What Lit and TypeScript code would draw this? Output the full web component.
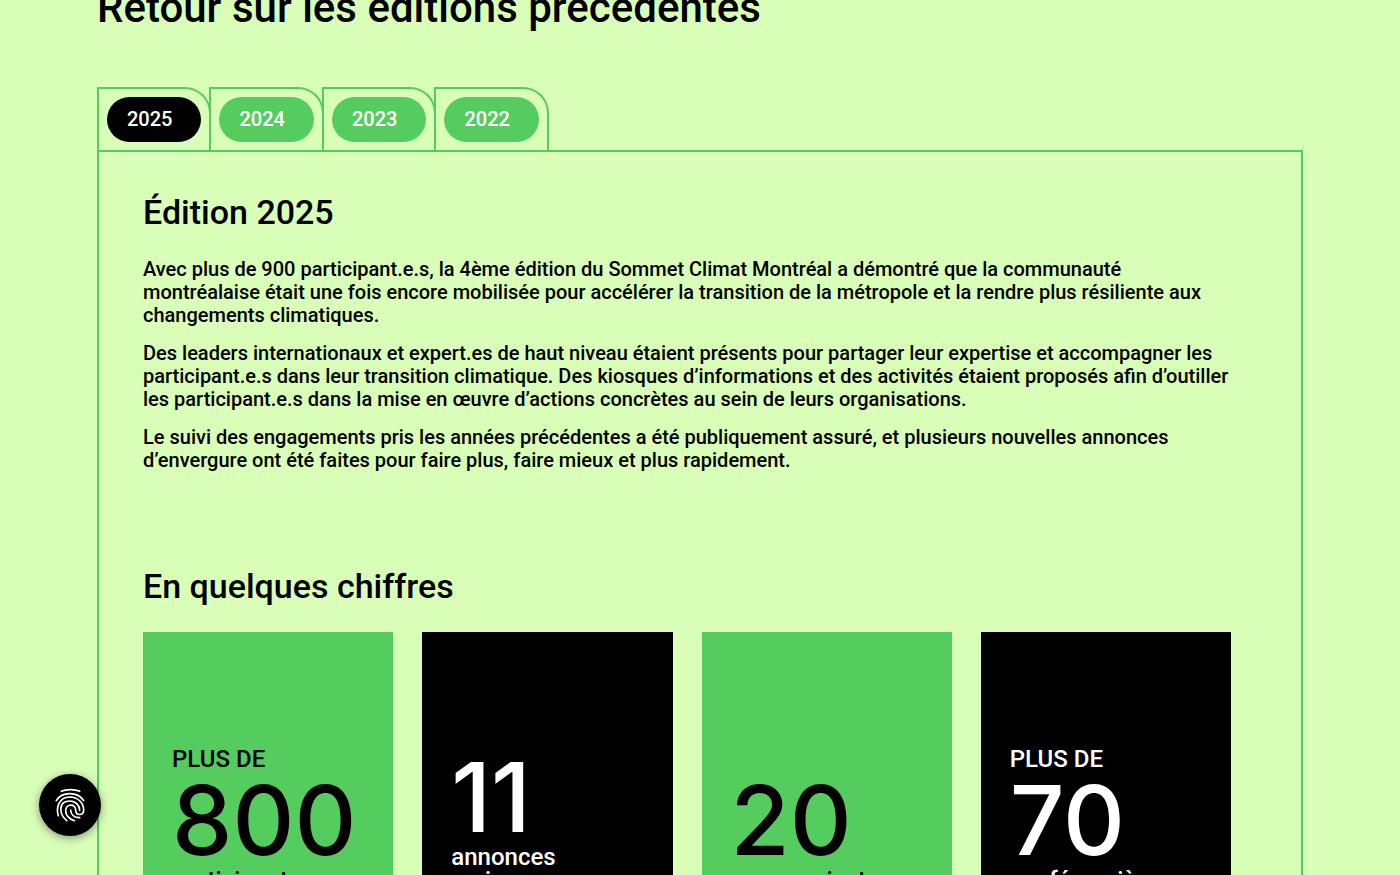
import { LitElement, html, css, nothing } from "lit";
import { customElement, state } from "lit/decorators.js";

interface Figure {
  prefix?: string;
  value: string;
  label: string[];
}

const YEARS = ["2025", "2024", "2023", "2022"];

const FIGURES: Figure[] = [
  { prefix: "PLUS DE", value: "800", label: ["participants"] },
  { value: "11", label: ["annonces", "majeures"] },
  { value: "20", label: ["co-organisateurs"] },
  { prefix: "PLUS DE", value: "70", label: ["conférencières"] },
];

@customElement("app-root")
export class AppRoot extends LitElement {
  static styles = css`
    :host {
      display: block;
      height: 100vh;
      overflow: hidden;
      background: #d9feb8;
      color: #000;
      font-family: Roboto, "Liberation Sans", sans-serif;
      font-weight: 500;
    }
    h1, h2, p { margin: 0; font-weight: 500; }
    .page { margin: -18px 97px 0; }
    h1 { font-size: 42px; line-height: 52px; }
    .tabs { display: flex; margin-top: 53px; }
    .tab {
      border: 2px solid #55cd5e;
      border-bottom: 0;
      border-top-right-radius: 26px;
      padding: 8px;
    }
    .tab + .tab { margin-left: -2px; }
    .pill {
      display: block;
      border: 0;
      border-radius: 24px;
      padding: 0 29px 0 20px;
      background: #55cd5e;
      color: #fff;
      font: inherit;
      font-size: 20px;
      line-height: 45px;
      cursor: pointer;
    }
    .pill.active { background: #000; }
    .panel {
      border: 2px solid #55cd5e;
      padding: 40px 70px 60px 44px;
    }
    h2 { font-size: 34px; line-height: 40px; }
    .prose {
      display: grid;
      gap: 15px;
      margin: 26px 0 94px;
      font-size: 20px;
      line-height: 23px;
    }
    .cards {
      display: grid;
      grid-template-columns: repeat(4, minmax(0, 1fr));
      gap: 29px;
      margin-top: 26px;
    }
    .card {
      display: flex;
      flex-direction: column;
      justify-content: flex-end;
      box-sizing: border-box;
      min-height: 289px;
      padding: 29px;
      background: #55cd5e;
      font-size: 24px;
      line-height: 23px;
    }
    .card:nth-child(even) { background: #000; color: #fff; }
    .value {
      font-family: Inter, Roboto, sans-serif;
      font-size: 96px;
      line-height: 98px;
    }
    .row { display: block; }
    .cookie {
      position: fixed;
      left: 39px;
      bottom: 39px;
      display: grid;
      place-items: center;
      width: 62px;
      height: 62px;
      padding: 0;
      border: 0;
      border-radius: 50%;
      background: #000;
      box-shadow: 0 2px 8px rgba(0, 0, 0, 0.4);
      cursor: pointer;
    }
  `;

  @state() private year = "2025";

  private renderFigure(f: Figure) {
    return html`<div class="card">
      ${f.prefix ? html`<span class="prefix">${f.prefix}</span>` : nothing}
      <span class="value">${f.value}</span>
      <span class="label">${f.label.map((l) => html`<span class="row">${l}</span>`)}</span>
    </div>`;
  }

  render() {
    return html`
      <main class="page">
        <h1>Retour sur les éditions précédentes</h1>
        <div class="tabs" role="tablist">
          ${YEARS.map(
            (y) => html`<div class="tab" role="presentation">
              <button
                class="pill ${y === this.year ? "active" : ""}"
                role="tab"
                aria-selected=${y === this.year}
                @click=${() => (this.year = y)}
              >${y}</button>
            </div>`
          )}
        </div>
        <section class="panel" role="tabpanel">
          <h2>Édition ${this.year}</h2>
          <div class="prose">
            <p>Avec plus de 900 participant.e.s, la 4ème édition du Sommet Climat Montréal a démontré que la communauté montréalaise était une fois encore mobilisée pour accélérer la transition de la métropole et la rendre plus résiliente aux changements climatiques.</p>
            <p>Des leaders internationaux et expert.es de haut niveau étaient présents pour partager leur expertise et accompagner les participant.e.s dans leur transition climatique. Des kiosques d’informations et des activités étaient proposés afin d’outiller les participant.e.s dans la mise en œuvre d’actions concrètes au sein de leurs organisations.</p>
            <p>Le suivi des engagements pris les années précédentes a été publiquement assuré, et plusieurs nouvelles annonces d’envergure ont été faites pour faire plus, faire mieux et plus rapidement.</p>
          </div>
          <h2>En quelques chiffres</h2>
          <div class="cards">${FIGURES.map((f) => this.renderFigure(f))}</div>
        </section>
      </main>
      <button class="cookie" aria-label="Gérer les témoins">
        <svg width="32" height="36" viewBox="59 57 96 108" fill="none" stroke="#fff" stroke-width="5" stroke-linecap="round">
          <path d="M81 70C95 63 122 63 136 70" />
          <path d="M66 98C82 70 130 70 148 98" />
          <path d="M72 143C64 118 74 88 106 87C132 87 148 106 148 126C148 144 124 144 124 126C124 106 94 106 94 128C94 140 104 152 120 158" />
          <path d="M97 158C74 138 70 99 107 99C124 99 136 112 136 127" />
          <path d="M109 126C109 140 120 149 136 149" />
        </svg>
      </button>
    `;
  }
}
